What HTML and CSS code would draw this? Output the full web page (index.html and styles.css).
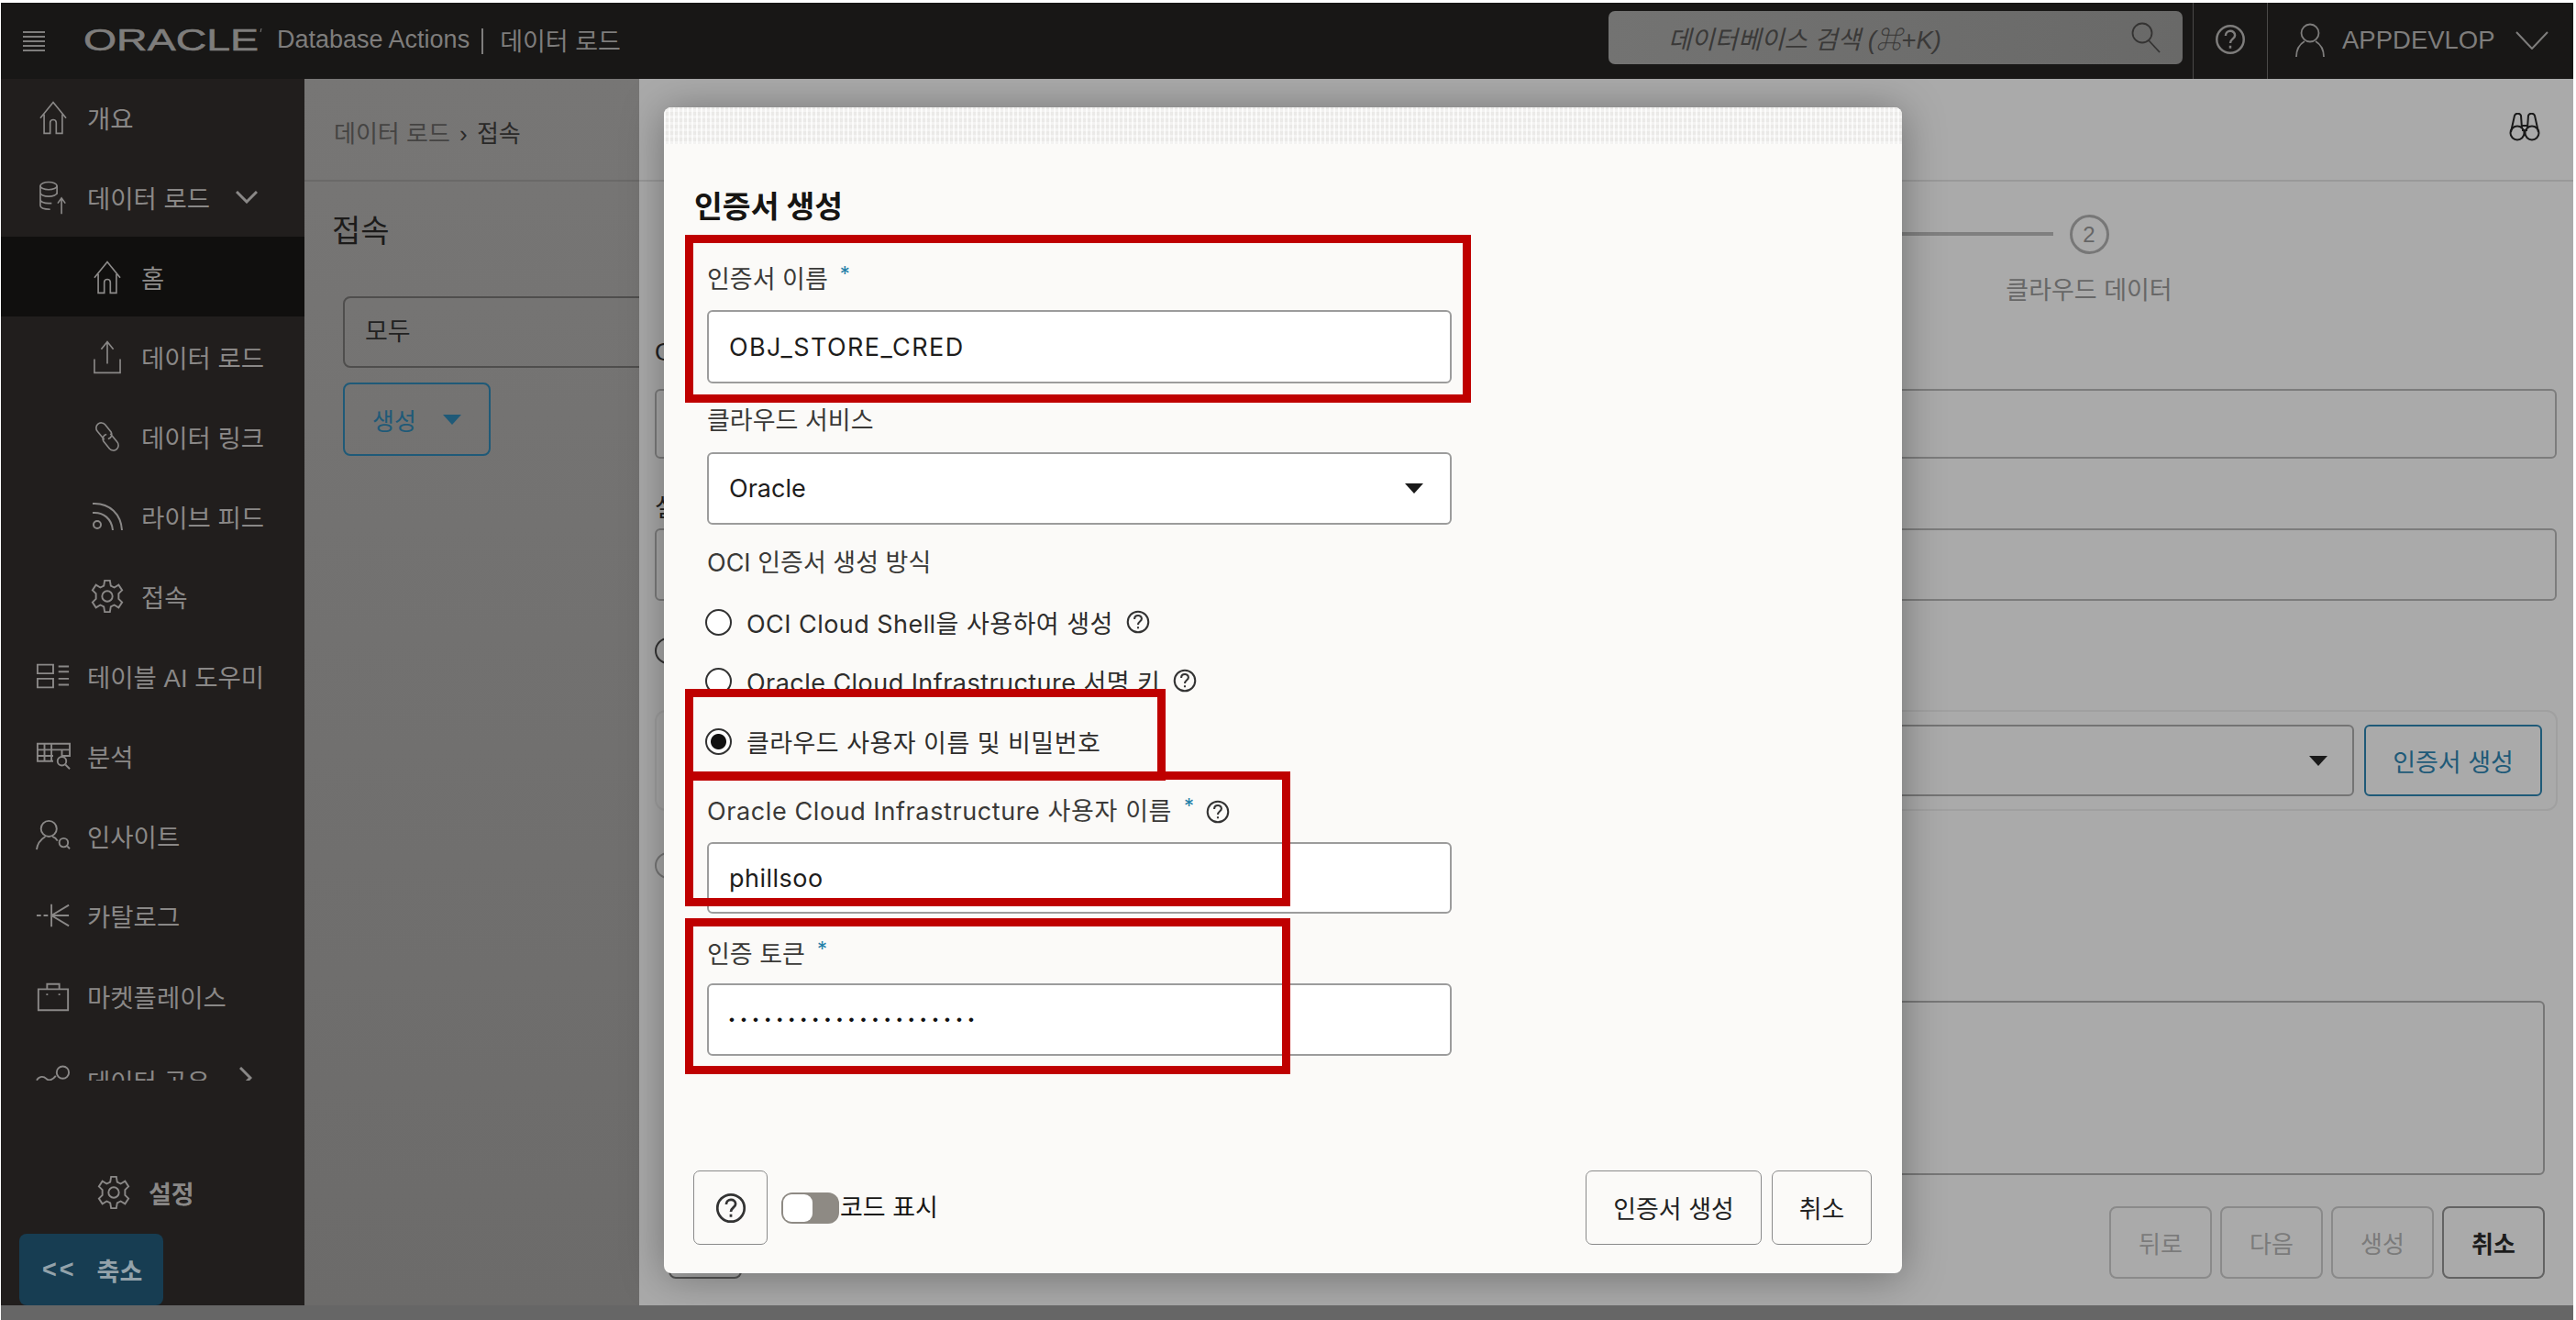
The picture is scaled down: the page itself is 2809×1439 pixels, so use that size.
FILE: index.html
```html
<!DOCTYPE html>
<html lang="ko">
<head>
<meta charset="utf-8">
<title>Database Actions | 데이터 로드</title>
<link rel="stylesheet" href="styles.css">
</head>
<body>
<svg class="defs" width="0" height="0" aria-hidden="true">
  <symbol id="i-home" viewBox="0 0 38 46"><path d="M2 24 19 3l17 21M7 19v25h8V30a4 4 0 0 1 8 0v14h8V19"/></symbol>
  <symbol id="i-db" viewBox="0 0 38 46"><ellipse cx="13" cy="8" rx="11" ry="5"/><path d="M2 8v26c0 3 5 5 13 5M24 8v11M2 17c0 3 5 5 11 5s11-2 11-5M2 26c0 3 5 5 11 5h4M30 45V24M25 31l5-7 5 7"/></symbol>
  <symbol id="i-up" viewBox="0 0 38 46"><path d="M19 32V3M11 13l8-10 8 10M2 26v18h34V26"/></symbol>
  <symbol id="i-link" viewBox="0 0 38 46"><path d="M15 27 6 16a6.500 6.500 0 0 1 10-9l8 10a6 6 0 0 1-4 9M23 19l9 11a6.500 6.500 0 0 1-10 9l-8-10a6 6 0 0 1 4-9"/></symbol>
  <symbol id="i-rss" viewBox="0 0 38 36"><circle cx="8" cy="27" r="4"/><path d="M3 14c12-1 21 7 22 19M3 4c19-1 31 12 32 29"/></symbol>
  <symbol id="i-gear" viewBox="0 0 40 40"><circle cx="20" cy="20" r="6"/><path d="M17 2h6l1 6 4 2 5-3 4 6-4 4v6l4 4-4 6-5-3-4 2-1 6h-6l-1-6-4-2-5 3-4-6 4-4v-6l-4-4 4-6 5 3 4-2z"/></symbol>
  <symbol id="i-ai" viewBox="0 0 40 30"><path d="M2 2h18v10H2zM2 18h18v10H2zM26 4h12M26 10h12M26 18h12M26 25h12"/></symbol>
  <symbol id="i-analy" viewBox="0 0 40 34"><path d="M2 3h37v7H2zM2 3v20h18M2 10h22M2 17h18M10 3v20M18 3v20M30 10v7h9v-7"/><circle cx="30" cy="23" r="5"/><path d="m34 27 5 5"/></symbol>
  <symbol id="i-ins" viewBox="0 0 40 38"><circle cx="15" cy="11" r="9"/><path d="M1 35c1-8 5-12 10-15M19 20c3 1 5 3 6 5"/><circle cx="32" cy="27" r="5"/><path d="m36 31 3 3"/></symbol>
  <symbol id="i-cat" viewBox="0 0 40 30"><path d="M1 15h5M9 15h5M18 2v26M18 15 38 3M18 15l20 12M18 15h20"/></symbol>
  <symbol id="i-bag" viewBox="0 0 40 34"><path d="M3 9h34v24H3zM13 9V3h14v6M13 14v2M27 14v2"/></symbol>
  <symbol id="i-share" viewBox="0 0 40 34"><path d="M1 23c3-5 8-5 11-2s7 2 11-3"/><circle cx="31" cy="14" r="7"/></symbol>
  <symbol id="i-help" viewBox="0 0 30 30"><circle cx="15" cy="15" r="13"/><path d="M10.500 11.500c0-6 9-6 9-.5 0 3.500-4.500 3.500-4.500 7.500M15 21v2.500"/></symbol>
</svg>

<div class="app">
  <header class="topbar">
    <svg class="burger" viewBox="0 0 24 22"><path d="M0 1h24M0 6h24M0 11h24M0 16h24M0 21h24"/></svg>
    <svg class="logo" viewBox="0 0 191 26"><text x="0" y="25" textLength="191" lengthAdjust="spacingAndGlyphs">ORACLE</text><path class="logo-tick" d="M194 1l-1 4"/></svg>
    <span class="brand">Database Actions</span>
    <span class="sep"></span>
    <span class="app-name">데이터 로드</span>
    <div class="search">
      <span class="search-text">데이터베이스 검색 (⌘+K)</span>
      <svg class="search-ico" viewBox="0 0 32 34"><circle cx="12" cy="12" r="10.500"/><path d="m19 20 12 13"/></svg>
    </div>
    <div class="top-cell help-cell"><svg class="ico-help-top"><use href="#i-help"/></svg></div>
    <div class="user">
      <svg class="user-ico" viewBox="0 0 32 38"><circle cx="16" cy="11" r="9.500"/><path d="M1 37c0-9 4-14 9-17M31 37c0-9-4-14-9-17"/></svg>
      <span>APPDEVLOP</span>
      <svg class="user-chev" viewBox="0 0 36 20"><path d="m1 1 17 18L35 1"/></svg>
    </div>
  </header>

  <div class="stage">
    <aside class="side">
      <nav class="nav">
        <a class="item"><svg class="ico"><use href="#i-home"/></svg>개요</a>
        <a class="item"><svg class="ico"><use href="#i-db"/></svg>데이터 로드<svg class="chev" viewBox="0 0 24 14"><path d="m1 1 11 11L23 1"/></svg></a>
        <a class="item sub active"><svg class="ico"><use href="#i-home"/></svg>홈</a>
        <a class="item sub"><svg class="ico"><use href="#i-up"/></svg>데이터 로드</a>
        <a class="item sub"><svg class="ico"><use href="#i-link"/></svg>데이터 링크</a>
        <a class="item sub"><svg class="ico"><use href="#i-rss"/></svg>라이브 피드</a>
        <a class="item sub"><svg class="ico"><use href="#i-gear"/></svg>접속</a>
        <a class="item"><svg class="ico"><use href="#i-ai"/></svg>테이블 AI 도우미</a>
        <a class="item"><svg class="ico"><use href="#i-analy"/></svg>분석</a>
        <a class="item"><svg class="ico"><use href="#i-ins"/></svg>인사이트</a>
        <a class="item"><svg class="ico"><use href="#i-cat"/></svg>카탈로그</a>
        <a class="item"><svg class="ico"><use href="#i-bag"/></svg>마켓플레이스</a>
        <a class="item clipped"><svg class="ico"><use href="#i-share"/></svg>데이터 공유<svg class="chev right" viewBox="0 0 14 24"><path d="m1 1 11 11L1 23"/></svg></a>
      </nav>
      <a class="settings"><svg class="ico"><use href="#i-gear"/></svg>설정</a>
      <a class="collapse"><span class="arrows">&lt;&lt;</span>축소</a>
    </aside>

    <main class="page">
      <div class="crumb">데이터 로드 <b>› 접속</b></div>
      <h1 class="page-title">접속</h1>
      <div class="filter">모두</div>
      <button class="create">생성<i class="caret teal"></i></button>
    </main>

    <section class="drawer">
      <div class="drawer-head">
        <svg class="binoc" viewBox="0 0 34 32"><circle cx="9" cy="22" r="7.500"/><circle cx="25" cy="22" r="7.500"/><path d="M2 21 6 3c1-3 6-3 7 0l1 14M32 21 28 3c-1-3-6-3-7 0l-1 14M14 14h6M14 19h6"/></svg>
      </div>
      <div class="stepper">
        <span class="step-line"></span>
        <div class="step"><span class="step-num">2</span><span class="step-label">클라우드 데이터</span></div>
      </div>
      <div class="form">
        <div class="d-label first">OCI</div>
        <div class="d-input h76"></div>
        <div class="d-label second">설명</div>
        <div class="d-input h79"></div>
        <div class="d-radio third"><i class="d-dot on"></i></div>
        <div class="cred-group">
          <div class="cred-select"><i class="caret"></i></div>
          <button class="cred-btn">인증서 생성</button>
        </div>
        <div class="d-radio fourth"><i class="d-dot"></i></div>
        <div class="d-area"></div>
        <div class="d-foot">
          <button class="d-btn peek"></button>
          <button class="d-btn off">뒤로</button>
          <button class="d-btn off">다음</button>
          <button class="d-btn off">생성</button>
          <button class="d-btn strong">취소</button>
        </div>
      </div>
    </section>

    <section class="modal">
      <div class="modal-strip"></div>
      <div class="modal-body">
        <h2 class="modal-title">인증서 생성</h2>
        <div class="label lb1">인증서 이름<sup class="req">*</sup></div>
        <div class="input i1">OBJ_STORE_CRED</div>
        <div class="label lb2">클라우드 서비스</div>
        <div class="input i2">Oracle<i class="caret dark"></i></div>
        <div class="label lb3">OCI 인증서 생성 방식</div>
        <div class="radios">
          <div class="radio"><i class="dot"></i>OCI Cloud Shell을 사용하여 생성<svg class="ico-help"><use href="#i-help"/></svg></div>
          <div class="radio"><i class="dot"></i>Oracle Cloud Infrastructure 서명 키<svg class="ico-help"><use href="#i-help"/></svg></div>
          <div class="radio sel"><i class="dot on"></i>클라우드 사용자 이름 및 비밀번호</div>
        </div>
        <div class="label lb4">Oracle Cloud Infrastructure 사용자 이름<sup class="req">*</sup><svg class="ico-help"><use href="#i-help"/></svg></div>
        <div class="input i3">phillsoo</div>
        <div class="label lb5">인증 토큰<sup class="req">*</sup></div>
        <div class="input i4"><span class="pw">•••••••••••••••••••••</span></div>
      </div>
      <div class="modal-foot">
        <button class="m-btn help"><svg class="ico-help big"><use href="#i-help"/></svg></button>
        <span class="toggle"><i class="knob"></i></span>
        <span class="toggle-label">코드 표시</span>
        <button class="m-btn wide">인증서 생성</button>
        <button class="m-btn narrow">취소</button>
      </div>
    </section>

    <span class="mark m1"></span>
    <span class="mark m2"></span>
    <span class="mark m3"></span>
    <span class="mark m4"></span>
  </div>
  <div class="strip"></div>
</div>
</body>
</html>
```

FILE: styles.css
```css
* { box-sizing: border-box; }
html, body { margin: 0; height: 100%; background: #fff; overflow: hidden; }
body { font-family: "Liberation Sans", "Noto Sans CJK KR", sans-serif; font-size: 27px; color: #161513; }
button { font: inherit; background: none; padding: 0; cursor: default; }
svg { fill: none; stroke: currentColor; stroke-width: 2; }
i { display: block; font-style: normal; }
.defs { position: absolute; }

.app { margin: 3px 3px 0 1px; height: 1436px; display: flex; flex-direction: column; }

/* top bar */
.topbar { height: 83px; flex: none; background: #181716; color: #7e7d7c; display: flex; align-items: center; padding-left: 24px; }
.burger { width: 24px; height: 22px; stroke-width: 2; }
.logo { width: 191px; height: 26px; margin-left: 42px; margin-top: -4px; overflow: visible; }
.logo text { font-family: "Liberation Sans", sans-serif; font-size: 34px; fill: #7e7d7c; stroke: #7e7d7c; stroke-width: .6; }
.logo-tick { stroke: #7e7d7c; stroke-width: 1; }
.brand { margin-left: 20px; margin-top: -2px; }
.sep { width: 2px; height: 28px; background: #7e7d7c; margin: 0 18px 0 13px; }
.app-name { font-size: 27px; margin-top: -2px; }
.search { width: 626px; height: 58px; margin-left: auto; margin-top: -7px; margin-right: 11px; background: linear-gradient(90deg, #737372, #696968); border-radius: 7px; display: flex; align-items: center; padding: 0 24px 0 65px; color: #3a3938; }
.search-text { font-style: italic; font-size: 27.500px; flex: 1; white-space: nowrap; }
.search-ico { width: 32px; height: 34px; stroke-width: 1.800; color: #343332; }
.top-cell { width: 82px; height: 83px; flex: none; border-left: 1px solid #4a4948; border-right: 1px solid #4a4948; display: flex; align-items: center; justify-content: center; }
.ico-help-top { width: 34px; height: 34px; margin-top: -4px; stroke-width: 2.200; }
.user { width: 333px; flex: none; display: flex; align-items: center; padding-left: 30px; font-size: 27.500px; margin-top: -2px; }
.user-ico { width: 32px; height: 38px; margin-right: 19px; stroke-width: 1.800; }
.user-chev { width: 36px; height: 20px; margin-left: 22px; }

/* stage */
.stage { flex: 1; position: relative; display: flex; min-height: 0; overflow: hidden; }
.strip { height: 16px; flex: none; background: #666; }

/* sidebar */
.side { width: 331px; flex: none; background: #211e1d; color: #8a8887; display: flex; flex-direction: column; }
.nav { height: 1092px; overflow: hidden; flex: none; }
.item { height: 87.100px; display: flex; align-items: center; padding-left: 38px; font-size: 27.500px; }
.item:first-child { margin-top: -2px; }
.item.clipped { margin-top: 5px; }
.item.clipped .ico { margin-top: -12px; }
.item.clipped .chev { margin-top: -6px; }
.item.sub { padding-left: 97px; }
.item.active { background: #100f0e; color: #8d8b8a; }
.ico { width: 38px; height: 38px; flex: none; margin-right: 18px; stroke-width: 2; overflow: visible; }
.chev { width: 24px; height: 14px; margin-left: 28px; stroke-width: 3; }
.chev.right { width: 14px; height: 24px; margin-left: 32px; }
.settings { display: flex; align-items: center; height: 44px; margin-top: 100px; padding-left: 104px; font-weight: 700; font-size: 27px; }
.settings .ico { margin-right: 19px; }
.collapse { margin-top: auto; margin-left: 20px; width: 157px; height: 78px; background: #173d52; border-radius: 8px; display: flex; align-items: center; padding-left: 25px; color: #93a2aa; font-weight: 700; }
.arrows { margin-right: 22px; letter-spacing: 3px; }

/* page behind */
.page { flex: 1; min-width: 0; background: linear-gradient(#777675, #6c6b6a); overflow: hidden; color: #2b2a29; }
.crumb { height: 112px; border-bottom: 2px solid #6a6968; padding: 42px 0 0 32px; font-size: 26px; color: #454443; line-height: 36px; }
.crumb b { font-weight: 400; color: #2a2928; word-spacing: 3px; margin-left: 3px; }
.page-title { margin: 32px 0 0 30px; font-size: 34px; font-weight: 400; line-height: 44px; color: #1c1b1a; }
.filter { margin: 49px 0 0 42px; width: 700px; height: 78px; border: 2px solid #4f4e4d; border-radius: 8px; padding-left: 22px; line-height: 74px; font-size: 27px; color: #222; }
.create { margin: 16px 0 0 42px; width: 161px; height: 80px; border: 2px solid #1f5a78; border-radius: 8px; color: #1f5a78; font-size: 26px; display: flex; align-items: center; padding-left: 30px; gap: 29px; }
.caret { width: 0; height: 0; border: 10px solid transparent; border-top: 11px solid #1a1a1a; border-bottom: 0; }
.caret.teal { border-top-color: #1f5a78; }

/* drawer */
.drawer { position: absolute; left: 696px; top: 0; right: 0; bottom: 0; background: #aaa; color: #222; }
.drawer-head { height: 112px; border-bottom: 2px solid #999; display: flex; align-items: center; justify-content: flex-end; padding-right: 36px; }
.binoc { width: 34px; height: 32px; stroke-width: 2; margin-top: -4px; color: #1a1a1a; }
.stepper { display: flex; justify-content: flex-end; padding: 36px 428px 0 0; }
.step-line { width: 800px; height: 4px; background: #7f7f7f; margin: 19px -61px 0 0; }
.step { width: 200px; display: flex; flex-direction: column; align-items: center; }
.step-num { width: 43px; height: 43px; border: 3px solid #777; border-radius: 50%; text-align: center; line-height: 37px; font-size: 24px; color: #666; }
.step-label { margin-top: 22px; line-height: 36px; white-space: nowrap; color: #676767; font-size: 27px; }
.form { padding: 0 17px 0 17px; }
.d-label { line-height: 36px; }
.d-label.first { margin-top: 31px; }
.d-label.second { margin-top: 36px; }
.d-input { border: 2px solid #7c7c7c; border-radius: 6px; margin-right: 1px; }
.h76 { height: 76px; margin-top: 22px; }
.h79 { height: 79px; margin-top: 4px; }
.d-radio { height: 36px; display: flex; align-items: center; }
.d-radio.third { margin-top: 36px; }
.d-radio.fourth { margin-top: 41px; }
.d-dot { width: 29px; height: 29px; border: 2px solid #777; border-radius: 50%; }
.d-dot.on { border: 2px solid #333; }
.cred-group { margin-top: 47px; height: 110px; border: 2px solid #a0a0a0; border-radius: 12px; padding: 14px 15px 0 14px; display: flex; gap: 11px; }
.cred-select { flex: 1; height: 78px; border: 2px solid #747474; border-radius: 6px; display: flex; align-items: center; justify-content: flex-end; padding-right: 27px; }
.cred-btn { width: 194px; height: 78px; border: 2px solid #1f5a78; border-radius: 6px; color: #1f5a78; font-size: 27px; }
.d-area { margin: 130px 14px 0 40px; height: 190px; border: 2px solid #777; border-radius: 6px; }
.d-foot { margin: 34px 14px 0 15px; display: flex; justify-content: flex-end; gap: 9px; }
.d-btn { width: 112px; height: 79px; border: 2px solid #8a8a8a; border-radius: 8px; font-size: 26px; }
.d-btn.off { color: #7b7b7b; }
.d-btn.strong { border-color: #636363; color: #1c1c1c; font-weight: 700; }
.d-btn.peek { width: 80px; margin-right: auto; border-color: #555; }

/* modal */
.modal { position: absolute; left: 723px; top: 31px; width: 1350px; height: 1271px; background: #fbfaf8; border-radius: 8px; box-shadow: 0 4px 46px rgba(0,0,0,.34); display: flex; flex-direction: column; overflow: visible; }
.modal-strip { height: 40px; border-radius: 8px 8px 0 0; background-color: #f3f2f0; background-image: repeating-linear-gradient(90deg, rgba(255,255,255,.6) 0 2px, rgba(0,0,0,.02) 2px 5px), repeating-linear-gradient(0deg, rgba(255,255,255,.4) 0 3px, rgba(0,0,0,.015) 3px 7px); }
.modal-body { padding-left: 47px; font-family: Inter, "Noto Sans CJK KR", sans-serif; }
.modal-title { margin: 48px 0 0 -14px; font-size: 33.500px; line-height: 40px; font-weight: 700; color: #161513; }
.label { line-height: 36px; height: 36px; color: #3a3937; font-size: 27px; display: flex; align-items: flex-start; white-space: nowrap; }
.req { color: #1f7fa8; font-size: 22px; line-height: 22px; margin-left: 13px; }
.lb1 { margin-top: 42px; }
.lb2 { margin-top: 23px; }
.lb3 { margin-top: 24px; }
.lb4 { margin-top: 27px; letter-spacing: .6px; }
.lb5 { margin-top: 27px; }
.input { width: 812px; margin-left: 0; background: #fff; border: 2px solid #9c9c9c; border-radius: 6px; padding-left: 22px; display: flex; align-items: center; justify-content: space-between; font-size: 27px; color: #1e1d1c; }
.i1 { height: 80px; margin-top: 15px; letter-spacing: 1.400px; }
.i2 { height: 79px; margin-top: 16px; padding-right: 29px; }
.i3 { height: 78px; margin-top: 15px; letter-spacing: .5px; }
.i4 { height: 79px; margin-top: 13px; }
.pw { font-family: "Liberation Sans", sans-serif; font-size: 17px; letter-spacing: 7.100px; color: #111; }
.radios { margin-top: 14px; }
.radio { height: 64px; display: flex; align-items: center; font-size: 27px; letter-spacing: .45px; color: #2e2d2c; white-space: nowrap; }
.radio.sel { margin-top: 2px; }
.dot { width: 29px; height: 29px; border: 2px solid #333; border-radius: 50%; margin: 0 16px 0 -2px; flex: none; background: #fff; position: relative; }
.dot.on { background: radial-gradient(circle, #111 0 8px, #fff 9px); }
.ico-help { width: 26px; height: 26px; margin-left: 14px; flex: none; color: #333; stroke-width: 2.400; overflow: visible; }
.lb4 .ico-help { margin: 5px 0 0 12px; }
.modal-foot { margin-top: auto; height: 81px; margin-bottom: 31px; padding: 0 33px 0 32px; display: flex; align-items: center; }
.m-btn { height: 81px; border: 1.500px solid #8a8a8a; border-radius: 7px; color: #222; font-size: 27px; background: #fbfaf8; }
.m-btn.help { width: 81px; display: flex; align-items: center; justify-content: center; }
.ico-help.big { width: 34px; height: 34px; margin: 0; }
.toggle { width: 63px; height: 34px; margin-left: 15px; background: #8e8a84; border-radius: 12px; padding: 2px; flex: none; }
.knob { width: 32px; height: 30px; background: #fff; border-radius: 9px; }
.toggle-label { margin: -4px auto 0 1px; font-size: 27px; }
.m-btn.wide { width: 192px; }
.m-btn.narrow { width: 109px; margin-left: 11px; }

/* red annotation rectangles */
.mark { position: absolute; border: 9px solid #bf0000; pointer-events: none; }
.m1 { left: 746px; top: 170px; width: 857px; height: 183px; }
.m2 { left: 746px; top: 665px; width: 524px; height: 100px; }
.m3 { left: 746px; top: 755px; width: 660px; height: 147px; }
.m4 { left: 746px; top: 915px; width: 660px; height: 170px; }
```
